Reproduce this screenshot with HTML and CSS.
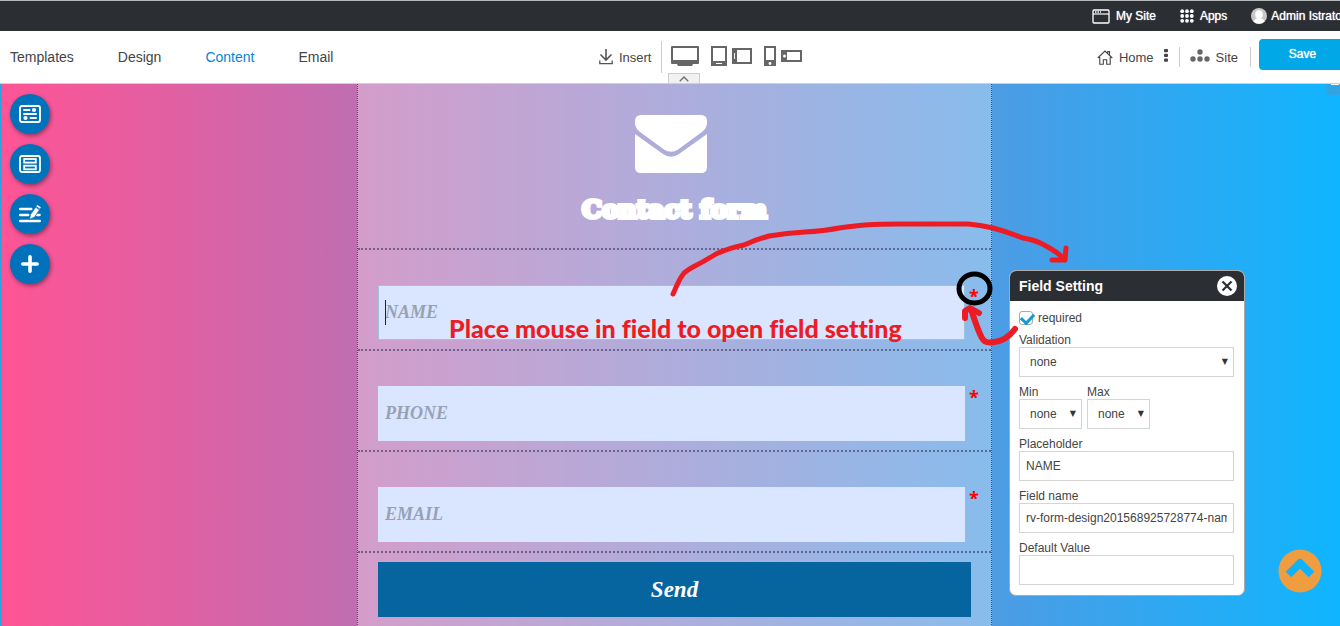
FILE: index.html
```html
<!DOCTYPE html>
<html lang="en">
<head>
<meta charset="utf-8">
<title>Form Editor</title>
<link rel="stylesheet" href="styles.css">
</head>
<body>
<header class="topbar">
  <a class="top-link" href="#"><svg width="18" height="16" viewBox="0 0 18 16"><rect x="1" y="2" width="16" height="13" rx="1" fill="none" stroke="#fff" stroke-width="1.300"/><path d="M1 6h16" stroke="#fff" stroke-width="1.200"/><path d="M3 4h6" stroke="#fff" stroke-width="1.500" stroke-dasharray="1.500 1"/></svg><span>My Site</span></a>
  <a class="top-link" href="#"><svg width="14" height="14" viewBox="0 0 14 14" fill="#fff"><circle cx="2.200" cy="2.200" r="1.900"/><circle cx="7" cy="2.200" r="1.900"/><circle cx="11.800" cy="2.200" r="1.900"/><circle cx="2.200" cy="7" r="1.900"/><circle cx="7" cy="7" r="1.900"/><circle cx="11.800" cy="7" r="1.900"/><circle cx="2.200" cy="11.800" r="1.900"/><circle cx="7" cy="11.800" r="1.900"/><circle cx="11.800" cy="11.800" r="1.900"/></svg><span>Apps</span></a>
  <a class="top-link user" href="#"><svg width="16" height="16" viewBox="0 0 16 16"><circle cx="8" cy="8" r="8" fill="#c8c8c8"/><ellipse cx="8" cy="6.500" rx="3.800" ry="4.300" fill="#fff"/><path d="M2.500 13.500Q4 10 8 10t5.500 3.500A8 8 0 0 1 2.500 13.500z" fill="#fff"/></svg><span>Admin Istrator</span></a>
</header>
<div class="toolbar">
  <nav class="menu"><a href="#">Templates</a><a href="#">Design</a><a class="active" href="#">Content</a><a href="#">Email</a></nav>
  <div class="devices">
    <button class="tool insert"><svg width="14" height="16" viewBox="0 0 14 16" fill="none" stroke="#555" stroke-width="1.600"><path d="M7 0v11M1.500 5.500L7 11l5.500-5.500"/><path d="M.8 11.500v3.200h12.400v-3.200" stroke-width="1.300"/></svg>Insert</button>
    <span class="rule tall"></span>
    <button class="tool desktop" aria-label="Desktop"><svg width="28" height="20" viewBox="0 0 28 20"><path fill="#666" fill-rule="evenodd" d="M1 0h26q1 0 1 1v16q0 1-1 1h-5l-1 2H7l-1-2H1q-1 0-1-1V1q0-1 1-1zm1 2v12h24V2z"/></svg></button>
    <button class="tool tablet" aria-label="Tablet portrait"><svg width="16" height="20" viewBox="0 0 16 20"><path fill="#666" fill-rule="evenodd" d="M0 0h16v20H0zM2 2v13h12V2zm3 15v1h6v-1z"/></svg></button>
    <button class="tool" aria-label="Tablet landscape"><svg width="20" height="16" viewBox="0 0 20 16"><path fill="#666" fill-rule="evenodd" d="M0 0h20v16H0zM5 2v12h13V2zM2 5v6h1V5z"/></svg></button>
    <button class="tool phone" aria-label="Phone portrait"><svg width="12" height="20" viewBox="0 0 12 20"><path fill="#666" fill-rule="evenodd" d="M0 0h12v20H0zM2 2v12h8V2z"/><circle cx="6" cy="17.500" r="1.400" fill="#fff"/></svg></button>
    <button class="tool" aria-label="Phone landscape"><svg width="21" height="12" viewBox="0 0 21 12"><path fill="#666" fill-rule="evenodd" d="M0 0h21v12H0zM6 2v8h13V2z"/><circle cx="3.500" cy="6" r="1.500" fill="#fff"/></svg></button>
    <button class="collapse" aria-label="Collapse"><svg width="10" height="6" viewBox="0 0 10 6" fill="none" stroke="#777" stroke-width="1.500"><path d="M.8 5.300L5 1l4.200 4.300"/></svg></button>
  </div>
  <div class="site-tools">
    <a class="tool" href="#"><svg width="16" height="15" viewBox="0 0 16 15" fill="none" stroke="#444" stroke-width="1.100"><path d="M.7 8L8 1l7.300 7M2.800 7v7.300h3.500V9.700h3.400v4.600h3.500V7M12.500 4.800V1.500h-1.700v1.600"/></svg>Home</a>
    <button class="tool dots" aria-label="More"><svg width="4" height="13" viewBox="0 0 4 13" fill="#444"><rect width="4" height="3.300" rx="1"/><rect y="4.700" width="4" height="3.300" rx="1"/><rect y="9.400" width="4" height="3.300" rx="1"/></svg></button>
    <span class="rule"></span>
    <a class="tool sitemap" href="#"><svg width="20" height="16" viewBox="0 0 20 16" fill="#666"><circle cx="10" cy="3" r="2.700"/><circle cx="3" cy="10" r="2.700"/><circle cx="10" cy="10" r="2.700"/><circle cx="17" cy="10" r="2.700"/></svg>Site</a>
    <span class="rule"></span>
    <button class="save">Save</button>
  </div>
</div>
<main class="canvas">
  <aside class="side">
    <button class="round" aria-label="Form settings"><svg width="22" height="18" viewBox="0 0 22 18" fill="none" stroke="#fff" stroke-width="1.900" stroke-linecap="round"><rect x="1" y="1" width="20" height="16" rx="2"/><path d="M5 5h5.500M5 9h12M11.500 13h5.500"/><g fill="#fff" stroke="none"><circle cx="15" cy="5" r="2.100"/><circle cx="6.500" cy="13" r="2.100"/></g></svg></button>
    <button class="round" aria-label="Form fields"><svg width="22" height="18" viewBox="0 0 22 18" fill="none" stroke="#fff" stroke-width="1.800"><rect x="1" y="1" width="20" height="16" rx="2"/><rect x="5.200" y="4" width="11.600" height="3.600"/><rect x="5.200" y="10.700" width="11.600" height="3.600"/></svg></button>
    <button class="round" aria-label="Edit text"><svg width="22" height="18" viewBox="0 0 22 18"><g stroke="#fff" stroke-width="2.500" stroke-linecap="round"><path d="M1.200 4h11M1.200 10h8M1.200 16h19.500M18 10h2.500"/></g><path d="M10.500 14.500l1-5L17 1.500l4 2.700-5.500 8z" fill="#fff" stroke="#0072bc" stroke-width=".8"/><path d="M16 1.800l5.200 3.600" stroke="#0072bc" stroke-width=".8"/><path d="M17.300 1l1-1 3.500 2.300-.8 1.400z" fill="#fff"/></svg></button>
    <button class="round" aria-label="Add"><svg width="18" height="18" viewBox="0 0 18 18" stroke="#fff" stroke-width="3.600" stroke-linecap="round"><path d="M9 1.800v14.400M1.800 9h14.400"/></svg></button>
  </aside>
  <form class="form">
    <div class="form-head">
      <svg width="72" height="58" viewBox="0 0 72 58" fill="#fff"><path d="M6 0h60q6 0 6 6v2q0 5-5 9L43 34.500q-7 4.500-14 0L5 17Q0 13 0 8V6Q0 0 6 0z"/><path d="M0 19l28 20q8 5.500 16 0L72 19v33q0 6-6 6H6q-6 0-6-6z"/></svg>
      <h1>Contact form</h1>
    </div>
    <div class="row active"><span class="caret"></span><input class="field" aria-label="Name" placeholder="NAME"><span class="star">*</span></div>
    <div class="row"><input class="field" aria-label="Phone" placeholder="PHONE"><span class="star">*</span></div>
    <div class="row"><input class="field" aria-label="Email" placeholder="EMAIL"><span class="star">*</span></div>
    <div class="row send-row"><button class="send" type="button">Send</button></div>
  </form>
  <div class="right">
    <section class="panel">
      <div class="panel-head"><h2>Field Setting</h2><button class="close" aria-label="Close"><svg width="20" height="20" viewBox="0 0 20 20"><circle cx="10" cy="10" r="10" fill="#fff"/><path d="M5.500 5.500l9 9M14.500 5.500l-9 9" stroke="#2b2e33" stroke-width="2.200"/></svg></button></div>
      <div class="panel-body">
        <label class="check"><input type="checkbox" checked>required</label>
        <label class="group">Validation<span class="pick"><select><option>none</option></select></span></label>
        <div class="pair">
          <label class="group">Min<span class="pick"><select><option>none</option></select></span></label>
          <label class="group">Max<span class="pick"><select><option>none</option></select></span></label>
        </div>
        <label class="group">Placeholder<input class="text" value="NAME"></label>
        <label class="group">Field name<input class="text" value="rv-form-design201568925728774-name"></label>
        <label class="group">Default Value<input class="text" value=""></label>
      </div>
    </section>
  </div>
  <span class="corner"></span>
  <button class="to-top" aria-label="Back to top"><svg width="44" height="44" viewBox="0 0 44 44"><circle cx="22" cy="22" r="21.500" fill="#f09d40"/><path d="M10.500 25.500L22 14l11.500 11.500" fill="none" stroke="#12b2fb" stroke-width="8" stroke-linejoin="round"/></svg></button>
  <svg class="marks" width="1340" height="542" viewBox="0 84 1340 542" fill="none" stroke="#ed1c24" stroke-width="5" stroke-linecap="round" stroke-linejoin="round">
    <path d="M673 294L677 285Q680 278 684 273Q689 269 693 267Q705 261 716 254Q729 248 744 245Q755 240 769 236Q787 233 805 232Q824 231 839 228Q854 226 865 225Q880 224 900 224H968Q980 225 993 228Q1008 232 1023 238Q1036 240 1046 246Q1059 253 1065 260M1066 248L1065 260L1052 260"/>
    <path d="M1015 329Q1006 341 994 342Q985 344 982 338Q978 331 971 309M965 318V311L970 308L979 313" stroke-width="6"/>
    <ellipse cx="974.500" cy="288.500" rx="15.500" ry="14.500" stroke="#000"/>
  </svg>
  <p class="note">Place mouse in field to open field setting</p>
</main>
</body>
</html>
```
FILE: styles.css
```css
* { box-sizing: border-box; }
body { margin: 0; height: 100vh; display: flex; flex-direction: column; overflow: hidden; font-family: "Liberation Sans", Arial, sans-serif; color: #444; background: #fff; }
button { font: inherit; color: inherit; border: 0; background: none; padding: 0; }
a { color: inherit; text-decoration: none; }
svg { display: block; flex: none; }

.topbar { flex: none; height: 31px; margin-right: -6px; display: flex; align-items: center; justify-content: flex-end; gap: 24px; background: #2b2e33; border-top: 1px solid #b5b8b8; color: #fff; font-size: 12px; white-space: nowrap; text-shadow: 0 0 1px #fff; }
.top-link { display: flex; align-items: center; gap: 6px; }
.user { gap: 4px; }

.toolbar { flex: none; height: 53px; display: flex; align-items: center; justify-content: space-between; border-bottom: 1px solid #d0d0d0; padding-left: 10px; font-size: 13px; white-space: nowrap; }
.menu { display: flex; gap: 44px; font-size: 14px; }
.menu .active { color: #0a83d0; }
.devices { position: relative; align-self: stretch; display: flex; align-items: center; padding-right: 29px; }
.tool { display: flex; align-items: center; gap: 6px; }
.rule { width: 1px; height: 20px; background: #ccc; }
.tall { height: 32px; margin: 0 9px 0 10px; }
.tablet { margin: 0 5px 0 12px; }
.phone { margin: 0 5px 0 12px; }
.desktop, .tablet, .phone, .tablet + .tool, .phone + .tool { padding-bottom: 2px; }
.collapse { position: absolute; left: 69px; bottom: 0; width: 32px; height: 10px; display: flex; align-items: center; justify-content: center; background: #f1f1f1; border: 1px solid #ccc; border-bottom: 0; }
.site-tools { display: flex; align-items: center; }
.dots { margin: 0 11px 3px 10px; }
.sitemap { margin: 0 12px 0 10px; }
.save { width: 89px; height: 31px; margin: 0 -8px 6px 8px; padding-right: 2px; border-radius: 4px; background: #00a8e8; color: #fff; font-size: 12px; text-shadow: 0 0 1px #fff; }

.canvas { position: relative; flex: 1; min-height: 0; overflow: hidden; display: grid; grid-template-columns: 355fr 635fr 348fr; border-left: 2px solid #2ba4e2; background: linear-gradient(90deg, #ff5495, #0fb5ff); }
.side { display: flex; flex-direction: column; gap: 10px; padding: 10px 8px; }
.round { width: 40px; height: 40px; border-radius: 50%; display: flex; align-items: center; justify-content: center; background: #0072bc; box-shadow: 1px 2px 4px rgba(0, 0, 0, .4); }

.form { background: rgba(255, 255, 255, .33); border: 1px dotted #444a70; border-width: 0 1px; font-family: "Liberation Serif", "Times New Roman", serif; }
.form-head { height: 166px; padding: 31px 8px 0 0; display: flex; flex-direction: column; align-items: center; border-bottom: 2px dotted rgba(40, 40, 80, .55); }
.form-head h1 { margin: 22px 0 0 8px; font: 700 25px/30px "DejaVu Serif", serif; color: #fff; -webkit-text-stroke: 4px #fff; white-space: nowrap; }
.row { position: relative; height: 101px; padding: 35px 4px 0 20px; display: flex; align-items: flex-start; gap: 4px; border-bottom: 2px dotted rgba(40, 40, 80, .55); }
.field { flex: 1; min-width: 0; height: 55px; padding: 0 6px; border: 1px solid #dae6ff; background: #dae6ff; font: italic 700 18px "Liberation Serif", serif; }
.field::placeholder { color: #98a1b3; opacity: 1; }
.active .field { border-color: #9cc4dc; }
.caret { position: absolute; left: 27px; top: 50px; width: 1px; height: 25px; background: #222; }
.star { width: 18px; color: #f00; font: 700 18px/22px "Open Sans", sans-serif; }
.send-row { height: auto; padding: 9px 20px 30px; border: 0; }
.send { flex: 1; height: 55px; background: #06659e; color: #fff; font: italic 700 23px "Liberation Serif", serif; }

.panel { width: 236px; margin: 186px 0 0 17px; border: 1px solid #aaa; border-radius: 7px; background: #fff; overflow: hidden; font-size: 12px; }
.panel-head { height: 30px; padding: 0 7px 0 9px; display: flex; align-items: center; justify-content: space-between; background: #2b2e33; color: #fff; }
.panel-head h2 { margin: 0; font-size: 14px; }
.panel-body { padding: 9px 10px 10px 9px; display: flex; flex-direction: column; gap: 8px; }
.check { display: flex; align-items: center; gap: 5px; height: 15px; }
.check input { appearance: none; position: relative; width: 14px; height: 14px; margin: 0; border: 1px solid #aaa; border-radius: 3px; background: #fff; }
.check input::after { content: ""; position: absolute; left: 1px; top: 1px; width: 10px; height: 6px; border: solid #0b9bdc; border-width: 0 0 3px 3px; transform: rotate(-47deg); }
.group { display: flex; flex-direction: column; line-height: 14px; }
.pair { display: flex; gap: 5px; }
.pair .group { width: 63px; }
.pick { position: relative; display: flex; }
.pick::after { content: "▼"; position: absolute; right: 6px; top: 8px; font: 8px/14px "DejaVu Sans", sans-serif; color: #333; pointer-events: none; }
.pick select { appearance: none; flex: 1; width: 100%; height: 30px; padding: 0 10px; border: 1px solid #d5d5d5; background: #fff; color: #444; font: 12px "Liberation Sans", sans-serif; }
.text { width: 100%; height: 30px; padding: 0 6px; border: 1px solid #d5d5d5; color: #444; font: 12px "Liberation Sans", sans-serif; }

.corner { position: absolute; right: 0; top: 0; width: 14px; height: 11px; border-bottom-left-radius: 4px; background: #2fa6e3; }
.corner::after { content: ""; position: absolute; right: 1px; top: 0; width: 8px; height: 1px; background: #fff; }
.to-top { position: absolute; right: 18px; bottom: 33px; }
.marks { position: absolute; left: -2px; top: 0; pointer-events: none; }
.note { position: absolute; left: 447px; top: 229px; margin: 0; color: #ed1c24; font: 900 25px/30px Lato, sans-serif; font-variant-ligatures: none; white-space: nowrap; pointer-events: none; }
```
